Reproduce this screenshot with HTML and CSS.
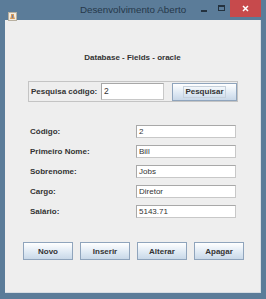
FILE: index.html
```html
<!DOCTYPE html>
<html>
<head>
<meta charset="utf-8">
<link rel="stylesheet" href="styles.css">
</head>
<body>
<div class="window">
  <div class="titlebar">
    <div class="app-icon">
      <svg width="9" height="9" viewBox="0 0 9 9"><rect x="0.5" y="0.5" width="8" height="8" fill="#f3ece0" stroke="#b8b0a0"/><path d="M3 2 L6 2 L6 4 L7 7 L2 7 L3 4 Z" fill="#d49a5a"/><path d="M4 3 L5 3 L5 6 L4 6 Z" fill="#6a7fb0"/></svg>
    </div>
    <div class="title">Desenvolvimento Aberto</div>
    <div class="controls">
      <div class="ctl min"><span></span></div>
      <div class="ctl max"><span></span></div>
      <div class="ctl close">
        <svg width="7" height="7" viewBox="0 0 7 7"><path d="M1 1 L6 6 M6 1 L1 6" stroke="#fff" stroke-width="1.5"/></svg>
      </div>
    </div>
  </div>
  <div class="content">
    <div class="heading">Database - Fields - oracle</div>
    <div class="search">
      <span class="label">Pesquisa código:</span>
      <div class="field search-field">2</div>
      <div class="btn search-btn"><span class="focus">Pesquisar</span></div>
    </div>
    <div class="form">
      <span class="label">Código:</span><div class="field">2</div>
      <span class="label">Primeiro Nome:</span><div class="field">Bill</div>
      <span class="label">Sobrenome:</span><div class="field">Jobs</div>
      <span class="label">Cargo:</span><div class="field">Diretor</div>
      <span class="label">Salário:</span><div class="field">5143.71</div>
    </div>
    <div class="actions">
      <div class="btn">Novo</div>
      <div class="btn">Inserir</div>
      <div class="btn">Alterar</div>
      <div class="btn">Apagar</div>
    </div>
  </div>
</div>
</body>
</html>
```
FILE: styles.css
```css
html, body { margin: 0; padding: 0; }
body { background: #5b7c99; width: 266px; height: 299px; overflow: hidden; font-family: "Liberation Sans", Arial, sans-serif; }
.window { width: 266px; height: 299px; background: #5b7c99; display: flex; flex-direction: column; }
.titlebar { height: 20px; display: flex; align-items: flex-start; position: relative; }
.app-icon { width: 9px; height: 9px; margin: 7px 0 0 8px; }
.title { position: absolute; left: 0; right: 0; top: 4px; text-align: center; font-family: "Liberation Sans", Arial, sans-serif; font-size: 9.8px; color: #26384a; pointer-events: none; }
.controls { margin-left: auto; display: flex; margin-right: 5px; }
.ctl { height: 17px; display: flex; align-items: center; justify-content: center; }
.min { width: 18px; }
.min span { width: 6px; height: 2px; background: #24323f; margin-top: 4px; }
.max { width: 17px; }
.max span { width: 7px; height: 6px; border: 1px solid #24323f; border-top-width: 2px; box-sizing: border-box; margin-top: -2px; }
.close { width: 31px; background: #c74a4c; }
.content { margin: 0 5px 6px 5px; flex: 1; background: #eeeeee; display: flex; flex-direction: column; align-items: stretch; border-bottom: 1px solid #d7dde3; border-right: 1px solid #d7dde3; }
.heading { text-align: center; font-size: 8px; font-weight: bold; color: #333; margin-top: 33px; height: 10px; line-height: 10px; }
.label { font-size: 8px; font-weight: bold; color: #333; white-space: nowrap; }
.search { margin: 18px 0 0 23px; width: 208px; height: 19px; border: 1px solid #c4c4c4; display: flex; align-items: center; }
.search .label { margin-left: 2px; width: 70px; }
.field { background: #fff; border: 1px solid #b0b0b0; border-color: #a8a8a8 #c8c8c8 #c8c8c8 #a8a8a8; height: 13px; box-sizing: border-box; font-size: 8px; line-height: 11px; color: #333; padding-left: 2px; }
.search-field { width: 63px; height: 17px; line-height: 15px; font-size: 8.5px; }
.btn { border: 1px solid #8fa4bc; background: linear-gradient(#ffffff, #dde8f3 60%, #c9d8e8); font-size: 8px; font-weight: bold; color: #333; display: flex; align-items: center; justify-content: center; box-sizing: border-box; }
.search-btn { width: 65px; height: 18px; margin-left: 8px; }
.focus { border: 1px solid #c6d1dc; padding: 0 1px; line-height: 10px; }
.form { display: grid; grid-template-columns: 106px 100px; row-gap: 7px; margin: 23px 0 0 25px; align-items: center; }
.form .label { line-height: 13px; }
.actions { display: flex; gap: 7px; margin: 24px 0 0 18px; }
.actions .btn { width: 50px; height: 18px; }
```
